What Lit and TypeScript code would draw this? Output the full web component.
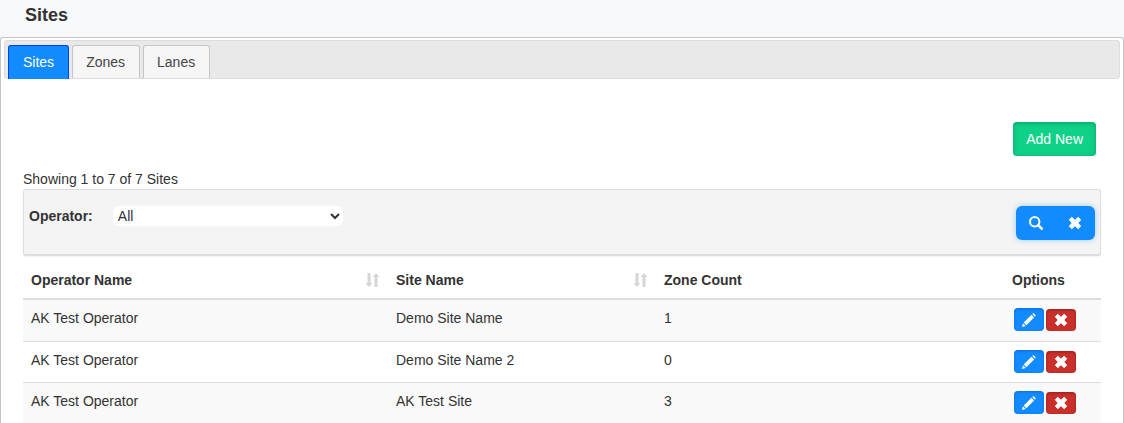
import { LitElement, html, css, svg } from "lit";
import { customElement, state } from "lit/decorators.js";

interface Site {
  operator: string;
  name: string;
  zones: number;
}

const SITES: Site[] = [
  { operator: "AK Test Operator", name: "Demo Site Name", zones: 1 },
  { operator: "AK Test Operator", name: "Demo Site Name 2", zones: 0 },
  { operator: "AK Test Operator", name: "AK Test Site", zones: 3 },
];

const cross = svg`<path d="M3.8 1.2 7 4.2l3.2-3 2.600 2.600L9.900 7l2.900 3.200-2.600 2.600L7 9.800l-3.200 3-2.600-2.600L4.100 7 1.200 3.800z" fill="currentColor" stroke="currentColor" stroke-width=".8" stroke-linejoin="round"/>`;
const magnifier = svg`<circle cx="5.7" cy="5.700" r="4.700" fill="none" stroke="currentColor" stroke-width="2"/><path d="M9.400 9.400l3.300 3.300" stroke="currentColor" stroke-width="2.600" stroke-linecap="round"/>`;
const pencil = svg`<path d="M0 14l1-3.800L3.700 13z M1.700 9.400 9.500 1.800l2.600 2.600-7.800 7.800z M10.300 1.100c.5-.6 1-1 1.700-.6l1.400 1.400c.5.500.2 1.200-.5 1.800z" fill="currentColor"/>`;
const sortArrows = svg`<path d="M2.500 0h3v10H7.500L4 14 .5 10h2z M9.500 14h3V4h2L11 0 7.500 4h2z" fill="currentColor"/>`;

@customElement("app-root")
export class AppRoot extends LitElement {
  @state() private activeTab = "Sites";

  static styles = css`
    :host {
      display: flex;
      flex-direction: column;
      height: 100vh;
      overflow: hidden;
      background: #f8f9fb;
      color: #333;
      font: 14px/20px "Liberation Sans", Arial, sans-serif;
    }
    * {
      box-sizing: border-box;
    }
    button,
    select {
      font: inherit;
      cursor: pointer;
    }
    .title {
      margin: 0;
      padding: 5px 25px 12px;
      font-size: 18px;
      line-height: 20px;
    }
    .panel {
      flex: 1;
      min-height: 0;
      padding: 2px 3px 0;
      border: 1px solid #c5c5c5;
      border-bottom: 0;
      border-radius: 3px 3px 0 0;
      background: #fff;
    }
    .tabs {
      display: flex;
      gap: 3px;
      padding: 4px 3px 0;
      border: 1px solid #ddd;
      border-radius: 3px;
      background: #e9e9e9;
    }
    .tab {
      height: 33px;
      padding: 0 14px 0 13px;
      border: 1px solid #c5c5c5;
      border-bottom: 0;
      border-radius: 3px 3px 0 0;
      background: #f6f6f6;
      color: #454545;
    }
    .tab.active {
      height: 34px;
      margin-bottom: -1px;
      padding: 0 14px 1px;
      border-color: #003eff;
      background: #128bff;
      color: #fff;
    }
    .content {
      padding: 43px 19px 0;
    }
    .actions {
      display: flex;
      justify-content: flex-end;
      padding: 0 5px 13px;
    }
    .add {
      height: 34px;
      padding: 0 13px;
      border: 0;
      border-radius: 4px;
      background: #0fd288;
      box-shadow: inset 0 1px 5px rgba(0, 70, 40, 0.35);
      color: #fff;
    }
    .count {
      margin: 0;
    }
    .filter {
      display: flex;
      align-items: flex-start;
      justify-content: space-between;
      height: 67px;
      padding: 16px 5px 0;
      border: 1px solid #ddd;
      border-bottom-width: 2px;
      border-radius: 3px;
      background: #f4f4f4;
      box-shadow: 0 1px 1px rgba(0, 0, 0, 0.05);
    }
    .field {
      display: flex;
      align-items: center;
      gap: 20px;
    }
    .field label {
      font-weight: bold;
    }
    .field select {
      width: 230px;
      height: 20px;
      padding: 0 1px;
      border: 0;
      border-radius: 6px;
      background-color: #fff;
      color: #333;
    }
    .group {
      display: flex;
      padding-right: 1px;
      border-radius: 6px;
      background: #128bff;
      box-shadow: 0 0 6px rgba(18, 139, 255, 0.35);
    }
    .group button {
      display: grid;
      place-items: center;
      width: 39px;
      height: 34px;
      padding: 0;
      border: 0;
      background: none;
      color: #fff;
    }
    table {
      width: 100%;
      margin-top: 1px;
      border-collapse: separate;
      border-spacing: 0;
      table-layout: fixed;
    }
    .operator-col {
      width: 365px;
    }
    .name-col {
      width: 268px;
    }
    .zone-col {
      width: 348px;
    }
    .options-col {
      width: 97px;
    }
    th {
      padding: 13px 8px 8px;
      border-bottom: 2px solid #ddd;
      text-align: left;
    }
    .head {
      display: flex;
      align-items: center;
      justify-content: space-between;
    }
    .sort {
      color: #d6d6d6;
    }
    td {
      height: 41px;
      padding: 8px;
      vertical-align: top;
    }
    tr + tr td {
      border-top: 1px solid #ddd;
    }
    tbody tr:nth-child(odd) {
      background: #f9f9f9;
    }
    svg {
      display: block;
    }
    .row-actions {
      display: flex;
      gap: 2px;
      height: 23px;
      padding-left: 2px;
    }
    td.options {
      padding-bottom: 0;
    }
    .icon {
      display: grid;
      place-items: center;
      width: 30px;
      height: 23px;
      padding: 0;
      border: 0;
      border-radius: 4px;
      background: #128bff;
      box-shadow: inset 0 1px 3px rgba(0, 40, 120, 0.3);
      color: #fff;
    }
    .icon.remove {
      height: 22px;
      margin-top: 1px;
      background: #c9302c;
      box-shadow: inset 0 1px 3px rgba(80, 0, 0, 0.4);
    }
  `;

  private heading(label: string, sortable: boolean) {
    return html`<th scope="col">
      <div class="head">
        <span>${label}</span>
        ${sortable
          ? html`<svg class="sort" width="15" height="14" viewBox="0 0 15 14" aria-hidden="true">${sortArrows}</svg>`
          : ""}
      </div>
    </th>`;
  }

  private glyph(shape: unknown) {
    return html`<svg width="14" height="14" viewBox="0 0 14 14" aria-hidden="true">${shape}</svg>`;
  }

  render() {
    return html`
      <h1 class="title">Sites</h1>
      <main class="panel">
        <div class="tabs" role="tablist">
          ${["Sites", "Zones", "Lanes"].map(
            (tab) => html`<button
              class="tab ${tab === this.activeTab ? "active" : ""}"
              role="tab"
              aria-selected=${tab === this.activeTab}
              @click=${() => (this.activeTab = tab)}
            >${tab}</button>`
          )}
        </div>
        <section class="content">
          <div class="actions"><button class="add">Add New</button></div>
          <p class="count">Showing 1 to 7 of 7 Sites</p>
          <div class="filter">
            <div class="field">
              <label for="operator">Operator:</label>
              <select id="operator">
                <option>All</option>
                <option>AK Test Operator</option>
              </select>
            </div>
            <div class="group">
              <button aria-label="Search">${this.glyph(magnifier)}</button>
              <button aria-label="Clear">${this.glyph(cross)}</button>
            </div>
          </div>
          <table>
            <colgroup>
              <col class="operator-col" />
              <col class="name-col" />
              <col class="zone-col" />
              <col class="options-col" />
            </colgroup>
            <thead>
              <tr>
                ${this.heading("Operator Name", true)} ${this.heading("Site Name", true)}
                ${this.heading("Zone Count", false)} ${this.heading("Options", false)}
              </tr>
            </thead>
            <tbody>
              ${SITES.map(
                (site) => html`<tr>
                  <td>${site.operator}</td>
                  <td>${site.name}</td>
                  <td>${site.zones}</td>
                  <td class="options">
                    <div class="row-actions">
                      <button class="icon" aria-label="Edit">${this.glyph(pencil)}</button>
                      <button class="icon remove" aria-label="Delete">${this.glyph(cross)}</button>
                    </div>
                  </td>
                </tr>`
              )}
            </tbody>
          </table>
        </section>
      </main>
    `;
  }
}
